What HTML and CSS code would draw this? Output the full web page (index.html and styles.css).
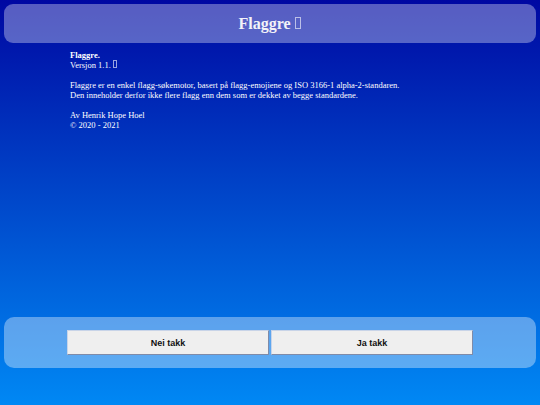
FILE: index.html
```html
<!DOCTYPE html>
<html lang="no">
<head>
<meta charset="utf-8">
<link rel="stylesheet" href="styles.css">
</head>
<body>
<div class="page">
  <header class="top">
    <h1 class="title">Flaggre <span class="tofu"></span></h1>
  </header>
  <main class="content">
    <p class="para"><b>Flaggre.</b><br>Versjon 1.1. <span class="tofu"></span></p>
    <p class="para">Flaggre er en enkel flagg-søkemotor, basert på flagg-emojiene og ISO 3166-1 alpha-2-standaren.<br>Den inneholder derfor ikke flere flagg enn dem som er dekket av begge standardene.</p>
    <p class="para">Av Henrik Hope Hoel<br>© 2020 - 2021</p>
  </main>
  <footer class="bottom">
    <div class="buttons">
      <button class="btn">Nei takk</button>
      <button class="btn">Ja takk</button>
    </div>
  </footer>
</div>
</body>
</html>
```
FILE: styles.css
```css
html, body {
  margin: 0;
  padding: 0;
  height: 100%;
}
body {
  background: linear-gradient(to bottom, #0008a2 0%, #0088f4 100%);
  font-family: "Liberation Serif", "DejaVu Serif", serif;
  color: #ffffff;
}
.page {
  height: 405px;
  display: flex;
  flex-direction: column;
  padding: 4px;
  box-sizing: border-box;
}
.top {
  height: 39px;
  border-radius: 9px;
  background: rgba(255, 255, 255, 0.34);
  display: flex;
  align-items: center;
  justify-content: center;
}
.title {
  margin: 0;
  font-size: 16px;
  font-weight: bold;
  color: #f2f2f8;
}
.tofu {
  display: inline-block;
  width: 0.25em;
  height: 0.62em;
  border: 1px solid rgba(255, 255, 255, 0.6);
  vertical-align: -0.05em;
  margin-left: 0.05em;
}
.content {
  flex: 1;
  padding: 7px 0 0 66px;
  font-size: 8.5px;
  line-height: 10px;
}
.content .tofu {
  width: 2px;
  height: 6px;
}
.para {
  margin: 0 0 10px 0;
}
.bottom {
  height: 51px;
  margin-bottom: 33px;
  border-radius: 10px;
  background: rgba(255, 255, 255, 0.36);
  display: flex;
  align-items: center;
  justify-content: center;
}
.buttons {
  display: flex;
  gap: 2px;
}
.btn {
  width: 202px;
  height: 25px;
  background: #efefef;
  border: 1px solid;
  border-color: #c8d4e8 #7f8ba8 #7f8ba8 #c8d4e8;
  font-family: "Liberation Sans", Arial, sans-serif;
  font-size: 9px;
  font-weight: bold;
  color: #111111;
  padding: 0;
}
```
